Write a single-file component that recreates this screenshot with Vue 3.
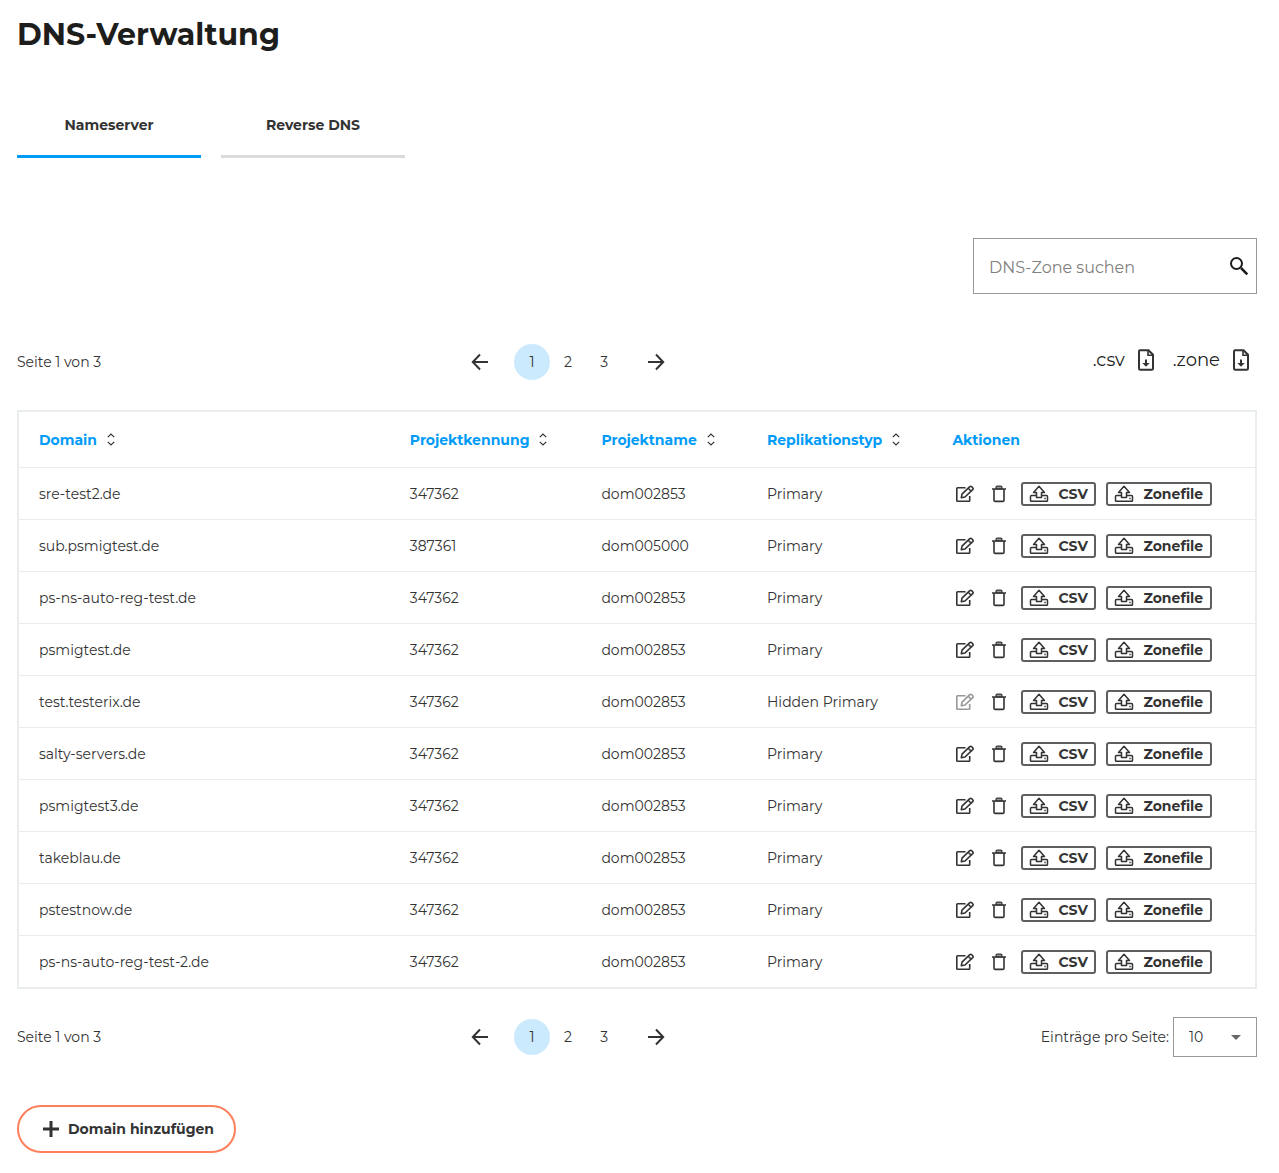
<script setup>
import { ref } from 'vue'

const tabs = ['Nameserver', 'Reverse DNS']
const activeTab = ref('Nameserver')
const search = ref('')
const page = ref(1)
const pages = [1, 2, 3]
const pageSize = ref(10)

const columns = [
  { key: 'domain', label: 'Domain', sortable: true },
  { key: 'project', label: 'Projektkennung', sortable: true },
  { key: 'name', label: 'Projektname', sortable: true },
  { key: 'type', label: 'Replikationstyp', sortable: true },
  { key: 'tools', label: 'Aktionen', sortable: false },
]

const zone = (domain, project = '347362', name = 'dom002853', type = 'Primary') => ({ domain, project, name, type })
const zones = [
  zone('sre-test2.de'),
  zone('sub.psmigtest.de', '387361', 'dom005000'),
  zone('ps-ns-auto-reg-test.de'),
  zone('psmigtest.de'),
  zone('test.testerix.de', '347362', 'dom002853', 'Hidden Primary'),
  zone('salty-servers.de'),
  zone('psmigtest3.de'),
  zone('takeblau.de'),
  zone('pstestnow.de'),
  zone('ps-ns-auto-reg-test-2.de'),
]
const exportsList = ['CSV', 'Zonefile']
</script>

<template>
  <main class="page">
    <svg class="sprite" aria-hidden="true">
      <symbol id="i-file" viewBox="0 0 18 22">
        <path d="M3 1.200h8.500L16 5.700V19.500Q16 20.800 14.700 20.800H3.300Q2 20.800 2 19.500V2.500Q2 1.200 3 1.200Z" fill="none" stroke="#333" stroke-width="2" />
        <path d="M11 1.500V6.200h5" fill="none" stroke="#333" stroke-width="1.600" />
        <path d="M8 10.500h2v3.500h2.700L9 17.700 5.300 14H8Z" fill="#333" />
      </symbol>
      <symbol id="i-edit" viewBox="0 0 20 18">
        <path d="M10.500 2.800H2.500Q1.800 2.800 1.800 3.500V15.500Q1.800 16.200 2.500 16.200H14Q14.700 16.200 14.700 15.500V11" fill="none" stroke="currentColor" stroke-width="1.600" />
        <path d="M6.300 12.700 7 9.200 14.800 1.700Q15.800 .9 16.800 1.800L17.700 2.700Q18.600 3.700 17.700 4.600L10 12ZM13.200 3.300 16.200 6.300" fill="none" stroke="currentColor" stroke-width="1.600" stroke-linejoin="round" />
      </symbol>
      <symbol id="i-trash" viewBox="0 0 14 18">
        <path d="M0 4H14M2 4.500V15.300Q2 16.400 3.100 16.400H10.900Q12 16.400 12 15.300V4.500" fill="none" stroke="currentColor" stroke-width="1.600" />
        <path d="M4 4V2.500Q4 1.200 5.300 1.200H8.700Q10 1.200 10 2.500V4Z" fill="currentColor" fill-opacity=".5" stroke="currentColor" stroke-width="1.200" />
      </symbol>
      <symbol id="i-upload" viewBox="0 0 20 18">
        <path d="M10 1.300 15.500 7.500H12.500V12.500H7.500V7.500H4.500Z" fill="none" stroke="currentColor" stroke-width="1.500" stroke-linejoin="round" />
        <path d="M7 10.500H2.500Q1.500 10.500 1.500 11.500V15.500Q1.500 16.300 2.300 16.300H17.700Q18.500 16.300 18.500 15.500V11.500Q18.500 10.500 17.500 10.500H13M15.300 13.500h1.400" fill="none" stroke="currentColor" stroke-width="1.500" />
      </symbol>
      <symbol id="i-sort" viewBox="0 0 10 14">
        <path d="M1.800 4.200 5 1 8.200 4.200M1.800 8.800 5 12 8.200 8.800" fill="none" stroke="currentColor" stroke-width="1.200" />
      </symbol>
      <symbol id="i-arrow" viewBox="0 0 24 24">
        <path d="M20 12H5M12 4.500 4.800 12 12 19.500" fill="none" stroke="currentColor" stroke-width="2" />
      </symbol>
    </svg>

    <h1>DNS-Verwaltung</h1>

    <nav class="tabs">
      <button v-for="tab in tabs" :key="tab" type="button" class="tab" :class="{ active: tab === activeTab }" @click="activeTab = tab">{{ tab }}</button>
    </nav>

    <form class="search" role="search" @submit.prevent>
      <input v-model="search" type="text" placeholder="DNS-Zone suchen" aria-label="DNS-Zone suchen" />
      <button type="submit" class="plain" aria-label="Suchen">
        <svg width="20" height="20" viewBox="0 0 20 20"><path d="M12 12 18.300 18.300" stroke="currentColor" stroke-width="2.500" /><circle cx="7.500" cy="7.500" r="5.500" fill="none" stroke="currentColor" stroke-width="2" /></svg>
      </button>
    </form>

    <section v-for="place in ['top', 'bottom']" :key="place" class="bar" :class="place">
      <span>Seite {{ page }} von 3</span>
      <nav class="pager" aria-label="Seiten">
        <button type="button" class="plain" aria-label="Zurück"><svg width="24" height="24"><use href="#i-arrow" /></svg></button>
        <div class="numbers">
          <button v-for="n in pages" :key="n" type="button" class="number" :class="{ current: n === page }" @click="page = n">{{ n }}</button>
        </div>
        <button type="button" class="plain next" aria-label="Weiter"><svg width="24" height="24"><use href="#i-arrow" /></svg></button>
      </nav>
      <div v-if="place === 'top'" class="downloads">
        <button v-for="kind in ['.csv', '.zone']" :key="kind" type="button" class="plain download">
          {{ kind }}<svg width="18" height="22"><use href="#i-file" /></svg>
        </button>
      </div>
      <div v-else class="size">
        <label for="page-size">Einträge pro Seite:</label>
        <div class="select">
          <select id="page-size" v-model="pageSize">
            <option :value="10">10</option>
            <option :value="25">25</option>
            <option :value="50">50</option>
          </select>
          <svg width="10" height="5" viewBox="0 0 10 5"><path d="M0 0H10L5 5Z" fill="currentColor" /></svg>
        </div>
      </div>
    </section>

    <table>
      <thead>
        <tr>
          <th v-for="col in columns" :key="col.key" :class="col.key" scope="col">
            <button v-if="col.sortable" type="button" class="plain sort">{{ col.label }}<svg width="10" height="14"><use href="#i-sort" /></svg></button>
            <template v-else>{{ col.label }}</template>
          </th>
        </tr>
      </thead>
      <tbody>
        <tr v-for="row in zones" :key="row.domain">
          <td>{{ row.domain }}</td>
          <td>{{ row.project }}</td>
          <td>{{ row.name }}</td>
          <td>{{ row.type }}</td>
          <td>
            <div class="actions">
              <button type="button" class="plain" aria-label="Bearbeiten" :disabled="row.type !== 'Primary'"><svg width="20" height="18"><use href="#i-edit" /></svg></button>
              <button type="button" class="plain trash" aria-label="Löschen"><svg width="14" height="18"><use href="#i-trash" /></svg></button>
              <button v-for="kind in exportsList" :key="kind" type="button" class="export" :class="kind.toLowerCase()"><svg width="20" height="18"><use href="#i-upload" /></svg>{{ kind }}</button>
            </div>
          </td>
        </tr>
      </tbody>
    </table>

    <button type="button" class="add">
      <svg width="16" height="16" viewBox="0 0 16 16"><path d="M8 0V16M0 8H16" stroke="currentColor" stroke-width="3" /></svg>
      Domain hinzufügen
    </button>
  </main>
</template>

<style>
body {
  background: #fff;
}
</style>

<style scoped>
.page {
  display: flex;
  flex-direction: column;
  padding: 16px 22px 20px 17px;
  font-family: Montserrat, Inter, sans-serif;
  font-size: 14px;
  line-height: 20px;
  color: #333;
}
.page * {
  box-sizing: border-box;
}
svg {
  display: block;
  flex: none;
}
.sprite {
  position: absolute;
  width: 0;
  height: 0;
}
button,
input,
select {
  font: inherit;
  color: inherit;
  margin: 0;
}
button {
  cursor: pointer;
}
h1 {
  margin: 0;
  font-size: 30px;
  line-height: 38px;
  font-weight: 700;
  color: #1d1d1b;
}
.plain {
  padding: 0;
  border: 0;
  background: none;
}
.tabs {
  display: flex;
  gap: 20px;
  margin-top: 41px;
}
.tab {
  width: 184px;
  height: 63px;
  padding: 0;
  border: 0;
  border-bottom: 3px solid #dadcdb;
  background: none;
  font-weight: 700;
}
.tab.active {
  border-color: #009bf7;
}
.search {
  display: flex;
  align-items: center;
  align-self: flex-end;
  width: 284px;
  height: 56px;
  margin-top: 80px;
  padding: 0 7px 0 15px;
  border: 1px solid #999;
  color: #1d1d1b;
}
.search input {
  flex: 1;
  min-width: 0;
  padding: 4px 0 0;
  border: 0;
  outline: 0;
  background: none;
  font-size: 16px;
}
.search input::placeholder {
  color: #808080;
  opacity: 1;
}
.bar {
  display: grid;
  grid-template-columns: 2fr 4fr 3fr;
  align-items: center;
}
.bar.top {
  margin-top: 50px;
}
.bar.bottom {
  order: 2;
  margin-top: 28px;
}
.pager {
  display: flex;
  align-items: center;
  justify-content: center;
  gap: 22px;
}
.next {
  transform: rotate(180deg);
}
.numbers {
  display: flex;
}
.number {
  width: 36px;
  height: 36px;
  padding: 0;
  border: 0;
  border-radius: 50%;
  background: none;
}
.number.current {
  background: #cbeafd;
}
.downloads {
  display: flex;
  justify-content: flex-end;
  gap: 18px;
  padding: 0 7px 4px 0;
}
.download {
  display: flex;
  align-items: center;
  gap: 12px;
  font-size: 18px;
  line-height: 24px;
  color: #222;
}
.size {
  display: flex;
  align-items: center;
  justify-content: flex-end;
  gap: 4px;
}
.select {
  display: grid;
  align-items: center;
}
.select select,
.select svg {
  grid-area: 1 / 1;
}
.select select {
  width: 84px;
  height: 40px;
  padding: 0 15px;
  border: 1px solid #999;
  border-radius: 0;
  background: #fff;
  appearance: none;
}
.select svg {
  justify-self: end;
  margin-right: 16px;
  color: #666;
  pointer-events: none;
}
table {
  order: 1;
  width: 100%;
  margin-top: 30px;
  table-layout: fixed;
  border: 2px solid #e9eeed;
  border-spacing: 0;
}
th,
td {
  padding: 0 0 0 20px;
  text-align: left;
}
th {
  height: 55px;
  color: #009bf7;
  font-weight: 700;
}
td {
  height: 52px;
  border-top: 1px solid #e9eceb;
}
.domain {
  width: 30%;
}
.project {
  width: 15.5%;
}
.name {
  width: 13.4%;
}
.type {
  width: 15%;
}
.sort {
  display: flex;
  align-items: center;
  gap: 9px;
}
.sort svg {
  color: #333;
}
.actions {
  display: flex;
  align-items: center;
  padding-left: 3px;
}
.actions .plain:disabled {
  opacity: .5;
}
.trash {
  margin: 0 15px 0 17px;
}
.export {
  display: flex;
  align-items: center;
  gap: 9px;
  height: 24px;
  padding: 0 6px;
  border: 2px solid #5f5f5f;
  border-radius: 3px;
  background: none;
  font-weight: 700;
}
.export.csv {
  width: 75px;
  margin-right: 10px;
}
.export.zonefile {
  width: 106px;
}
.add {
  order: 3;
  display: flex;
  align-items: center;
  align-self: flex-start;
  gap: 9px;
  height: 48px;
  margin-top: 48px;
  padding: 0 20px 0 24px;
  border: 2px solid #fd7f5c;
  border-radius: 24px;
  background: none;
  font-weight: 700;
}
</style>
